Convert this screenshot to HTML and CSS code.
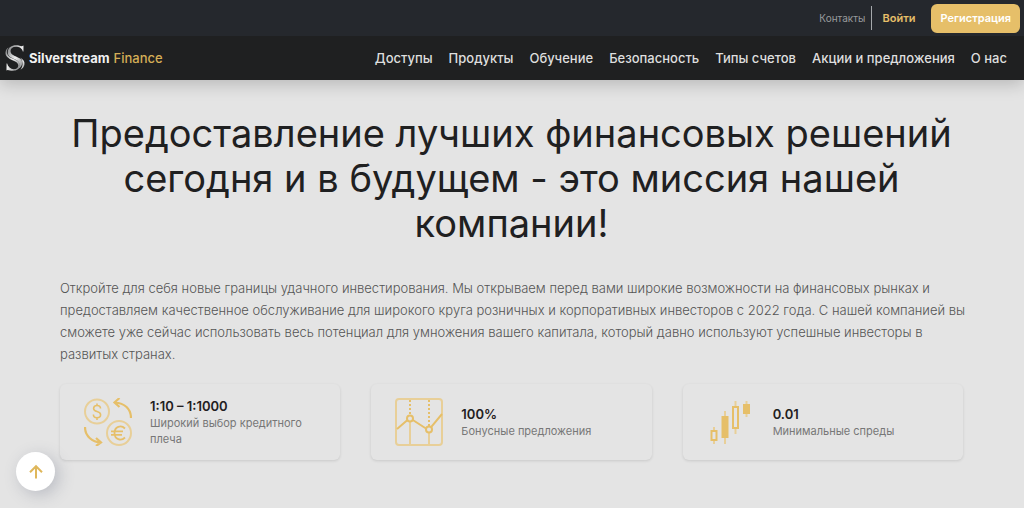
FILE: index.html
```html
<!DOCTYPE html>
<html lang="ru">
<head>
<meta charset="utf-8">
<meta name="viewport" content="width=device-width, initial-scale=1">
<title>Silverstream Finance</title>
<link rel="stylesheet" href="styles.css">
</head>
<body>
<header class="header">
  <div class="topbar">
    <a class="contacts" href="#">Контакты</a>
    <a class="login" href="#">Войти</a>
    <button class="register" type="button">Регистрация</button>
  </div>
  <div class="mainbar">
    <a class="brand" href="#">
      <svg class="brand-mark" viewBox="0 0 20 26" aria-hidden="true">
        <defs><linearGradient id="silver" x1="0" y1="0" x2="1" y2="1"><stop offset="0" stop-color="#77797b"/><stop offset=".5" stop-color="#eeeeee"/><stop offset="1" stop-color="#77797b"/></linearGradient></defs>
        <g fill="url(#silver)">
          <path d="M18.500 .5V6.500H17.800C17 3 14 1.800 11 1.800C7.500 1.800 5.500 3.500 5.500 6C5.500 9 8 10.200 12 12C16 13.800 18.200 15.500 17 19.500C16.300 22 14 24 11 24.500C13.500 23 14.500 21.500 14.300 19C14 16 11 15 8 13.600C4 11.800 2.600 10 2.800 6.800C3 2.500 6.500 .3 11 .3C14 .3 15.500 1 16.700 1.200Z"/>
          <path d="M1.500 25.500V18.500H2.200C3 22 5.500 24.100 8.800 24.200C11.500 24.200 13.300 22.800 13.300 20.500C13.300 17.500 10.500 16.500 7.500 15.200C3 13.300 .3 11 .5 7.500C.7 5 2 3.300 3.500 2.500C1.800 5 1.500 7 2.300 9C3.300 11.800 6 12.800 9.500 14.300C13.500 16 15 17.800 14.800 20.500C14.500 24 11.500 25.700 8 25.700C5.500 25.700 4 25.200 2.700 24.900Z"/>
          <path d="M15 12.500C18.500 14.500 20 16.500 19.500 19.500C19 22 17.500 23.800 15.500 24.700C18 21.500 18.800 17 15 12.500Z"/>
        </g>
      </svg>
      <span class="brand-name">Silverstream</span>
      <span class="brand-suffix">Finance</span>
    </a>
    <nav class="nav">
      <a href="#">Доступы</a>
      <a href="#">Продукты</a>
      <a href="#">Обучение</a>
      <a href="#">Безопасность</a>
      <a href="#">Типы счетов</a>
      <a href="#">Акции и предложения</a>
      <a href="#">О нас</a>
    </nav>
  </div>
</header>
<main class="content">
  <h1 class="title">Предоставление лучших финансовых решений сегодня и в будущем - это миссия нашей компании!</h1>
  <p class="lead">Откройте для себя новые границы удачного инвестирования. Мы открываем перед вами широкие возможности на финансовых рынках и предоставляем качественное обслуживание для широкого круга розничных и корпоративных инвесторов с 2022 года. С нашей компанией вы сможете уже сейчас использовать весь потенциал для умножения вашего капитала, который давно используют успешные инвесторы в развитых странах.</p>
  <section class="cards">
    <article class="card">
      <svg class="card-icon" viewBox="0 0 48 48" fill="none" stroke="#e6bf69" aria-hidden="true">
        <g stroke="#e8cf98" stroke-width="2"><circle cx="13" cy="13.500" r="12"/><circle cx="35" cy="35" r="12"/></g>
        <path stroke-width="1.600" d="M16.500 10.500C16.500 8.300 15 7.500 13 7.500S9.600 8.600 9.600 10.500S11 13 13 13.500S16.600 14.800 16.600 16.800S15 19.800 13 19.800S9.400 18.800 9.400 16.500M13 5.500V8M13 19.500V22"/>
        <path stroke-width="1.800" d="M41 30.500C37 26.500 30.500 28.500 30.500 35S37 43.500 41 39.500M27 33.300H39M27 36.800H38"/>
        <path stroke-width="2.200" d="M47 20C47 11 40.500 5 31 4.500M35.500 0L30.500 4.500L35.500 9M1 29C1 38 8 44 17 44.500M12 40L17 44.500L12 48"/>
      </svg>
      <div class="card-text">
        <h2>1:10 – 1:1000</h2>
        <p>Широкий выбор кредитного плеча</p>
      </div>
    </article>
    <article class="card">
      <svg class="card-icon" viewBox="0 0 48 48" fill="none" stroke="#e6bf69" aria-hidden="true">
        <rect x="1" y="1" width="46" height="46" rx="3" stroke="#e8cf98" stroke-width="2"/>
        <path stroke="#e8cf98" stroke-width="2" d="M15 24V46M34 34V46"/>
        <path stroke-width="2" stroke-dasharray="2 2" d="M15 2V17M34 2V28"/>
        <path stroke-width="2" d="M2 31L12.500 22M17.800 22L31 30.500M36.300 28.800L47 16"/>
        <circle cx="15" cy="20.500" r="3" stroke-width="2"/><circle cx="34" cy="31.500" r="3" stroke-width="2"/>
      </svg>
      <div class="card-text">
        <h2>100%</h2>
        <p>Бонусные предложения</p>
      </div>
    </article>
    <article class="card">
      <svg class="card-icon" viewBox="0 0 48 48" fill="none" stroke="#e6bf69" aria-hidden="true">
        <g stroke="#e8cf98" stroke-width="2"><path d="M7 29V46M18 13V46M28.500 3V36M39.500 3V19"/></g>
        <rect x="4.500" y="33" width="5" height="9" fill="#e4e4e4" stroke-width="2"/>
        <rect x="14.500" y="18" width="7" height="22" fill="#e6bf69" stroke="none"/>
        <rect x="26" y="9" width="5" height="21" fill="#e4e4e4" stroke-width="2"/>
        <rect x="36" y="6" width="7" height="10" fill="#e6bf69" stroke="none"/>
      </svg>
      <div class="card-text">
        <h2>0.01</h2>
        <p>Минимальные спреды</p>
      </div>
    </article>
  </section>
</main>
<button class="to-top" type="button" aria-label="Наверх">
  <svg viewBox="0 0 16 16" fill="none" stroke="#dfb75b" stroke-width="2" aria-hidden="true"><path d="M8 14.500V2.500M2 8.200L8 2.200L14 8.200"/></svg>
</button>
</body>
</html>
```
FILE: styles.css
```css
* { box-sizing: border-box; }
body {
  margin: 0;
  background: #e4e4e4;
  color: #1f2021;
  font-family: Inter, "Liberation Sans", sans-serif;
}
a { text-decoration: none; }
h1, h2, p { margin: 0; }
.header {
  background: #1f2021;
  box-shadow: 0 4px 16px rgba(0, 0, 0, 0.2);
}
.topbar {
  display: flex;
  align-items: center;
  justify-content: flex-end;
  height: 36px;
  padding-right: 4px;
  background: #25282d;
}
.contacts {
  padding-right: 6px;
  border-right: 1px solid #a5a8ab;
  color: #999b9d;
  font-size: 10px;
  line-height: 24px;
}
.login {
  padding: 0 16px 0 10px;
  color: #e6bf69;
  font-size: 11px;
  font-weight: 600;
}
.register {
  height: 29px;
  padding: 0 9px;
  border: 0;
  border-radius: 6px;
  background: #e6bf69;
  color: #fff;
  font: 600 11px Inter, sans-serif;
}
.mainbar {
  display: flex;
  align-items: center;
  justify-content: space-between;
  height: 44px;
  padding: 0 17px 0 5px;
}
.brand {
  display: flex;
  align-items: center;
  gap: 4px;
  color: #f1f1f1;
  font-size: 13px;
}
.brand-mark { width: 20px; height: 26px; }
.brand-name { font-weight: 700; }
.brand-suffix { color: #d5ae57; font-weight: 500; }
.nav { display: flex; gap: 16px; }
.nav a {
  color: #dedede;
  font-size: 13px;
  font-weight: 500;
  white-space: nowrap;
}
.content { padding: 31px 61px 47px 60px; }
.title {
  font-size: 38px;
  font-weight: 400;
  line-height: 45px;
  text-align: center;
}
.lead {
  margin-top: 31px;
  margin-right: -12px;
  color: #555;
  font-size: 13px;
  font-weight: 300;
  line-height: 22px;
}
.cards {
  display: grid;
  grid-template-columns: repeat(3, 1fr);
  gap: 31px;
  margin-top: 19px;
}
.card {
  display: flex;
  align-items: center;
  gap: 18px;
  min-height: 76px;
  padding: 12px 24px;
  border-radius: 6px;
  box-shadow: 0 1px 3px rgba(0, 0, 0, 0.12);
}
.card-icon { flex: none; width: 48px; height: 48px; }
.card h2 {
  font-size: 13px;
  font-weight: 600;
  line-height: 18px;
}
.card p {
  color: #777;
  font-size: 11px;
  line-height: 16px;
}
.to-top {
  position: fixed;
  bottom: 17px;
  left: 16px;
  display: grid;
  place-items: center;
  width: 39px;
  height: 39px;
  padding: 0;
  border: 0;
  border-radius: 50%;
  background: #fff;
  box-shadow: 4px 4px 16px rgba(80, 85, 110, 0.28);
}
.to-top svg { width: 16px; height: 16px; }
```
